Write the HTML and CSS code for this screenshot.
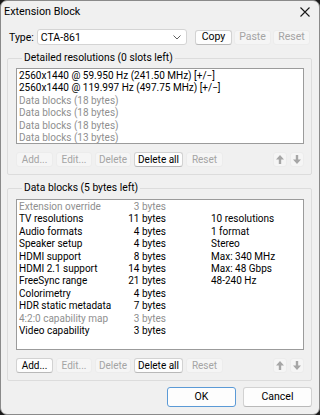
FILE: index.html
```html
<!DOCTYPE html>
<html>
<head>
<meta charset="utf-8">
<link rel="stylesheet" href="styles.css">
</head>
<body>
<div class="window">
  <div class="titlebar">
    <span class="title">Extension Block</span>
    <svg class="close" width="10" height="10" viewBox="0 0 10 10"><path d="M0.5 0.5 L9.5 9.5 M9.5 0.5 L0.5 9.5" stroke="#1a1a1a" stroke-width="1.1" fill="none"/></svg>
  </div>
  <div class="content">
    <div class="type-row">
      <span class="type-label">Type:</span>
      <div class="combo">
        <span>CTA-861</span>
        <svg width="8" height="5" viewBox="0 0 8 5"><path d="M0.5 0.5 L4 4 L7.5 0.5" stroke="#606060" stroke-width="1" fill="none"/></svg>
      </div>
      <button class="btn enabled w37">Copy</button>
      <button class="btn disabled w37">Paste</button>
      <button class="btn disabled w37">Reset</button>
    </div>

    <fieldset class="group g1">
      <legend>Detailed resolutions (0 slots left)</legend>
      <div class="list list1">
        <div class="row">2560x1440 @ 59.950 Hz (241.50 MHz) [+/−]</div>
        <div class="row">2560x1440 @ 119.997 Hz (497.75 MHz) [+/−]</div>
        <div class="row dim">Data blocks (18 bytes)</div>
        <div class="row dim">Data blocks (18 bytes)</div>
        <div class="row dim">Data blocks (18 bytes)</div>
        <div class="row dim">Data blocks (13 bytes)</div>
      </div>
      <div class="btn-row">
        <button class="btn disabled w37">Add...</button>
        <button class="btn disabled w36">Edit...</button>
        <button class="btn disabled w36">Delete</button>
        <button class="btn enabled w49">Delete all</button>
        <button class="btn disabled w37">Reset</button>
        <span class="spacer"></span>
        <button class="btn disabled arrow"><svg width="8" height="9" viewBox="0 0 8 9"><path d="M4 0 L8 4.5 L5.2 4.5 L5.2 9 L2.8 9 L2.8 4.5 L0 4.5 Z" fill="#a6a6a6"/></svg></button>
        <button class="btn disabled arrow"><svg width="8" height="9" viewBox="0 0 8 9"><path d="M4 9 L8 4.5 L5.2 4.5 L5.2 0 L2.8 0 L2.8 4.5 L0 4.5 Z" fill="#a6a6a6"/></svg></button>
      </div>
    </fieldset>

    <fieldset class="group g2">
      <legend>Data blocks (5 bytes left)</legend>
      <div class="list list2">
        <div class="drow dim"><span>Extension override</span><span class="b">3 bytes</span><span class="c"></span></div>
        <div class="drow"><span>TV resolutions</span><span class="b">11 bytes</span><span class="c">10 resolutions</span></div>
        <div class="drow"><span>Audio formats</span><span class="b">4 bytes</span><span class="c">1 format</span></div>
        <div class="drow"><span>Speaker setup</span><span class="b">4 bytes</span><span class="c">Stereo</span></div>
        <div class="drow"><span>HDMI support</span><span class="b">8 bytes</span><span class="c">Max: 340 MHz</span></div>
        <div class="drow"><span>HDMI 2.1 support</span><span class="b">14 bytes</span><span class="c">Max: 48 Gbps</span></div>
        <div class="drow"><span>FreeSync range</span><span class="b">21 bytes</span><span class="c">48-240 Hz</span></div>
        <div class="drow"><span>Colorimetry</span><span class="b">4 bytes</span><span class="c"></span></div>
        <div class="drow"><span>HDR static metadata</span><span class="b">7 bytes</span><span class="c"></span></div>
        <div class="drow dim"><span>4:2:0 capability map</span><span class="b">3 bytes</span><span class="c"></span></div>
        <div class="drow"><span>Video capability</span><span class="b">3 bytes</span><span class="c"></span></div>
      </div>
      <div class="btn-row">
        <button class="btn enabled w37">Add...</button>
        <button class="btn disabled w36">Edit...</button>
        <button class="btn disabled w36">Delete</button>
        <button class="btn enabled w49">Delete all</button>
        <button class="btn disabled w37">Reset</button>
        <span class="spacer"></span>
        <button class="btn disabled arrow"><svg width="8" height="9" viewBox="0 0 8 9"><path d="M4 0 L8 4.5 L5.2 4.5 L5.2 9 L2.8 9 L2.8 4.5 L0 4.5 Z" fill="#a6a6a6"/></svg></button>
        <button class="btn disabled arrow"><svg width="8" height="9" viewBox="0 0 8 9"><path d="M4 9 L8 4.5 L5.2 4.5 L5.2 0 L2.8 0 L2.8 4.5 L0 4.5 Z" fill="#a6a6a6"/></svg></button>
      </div>
    </fieldset>

    <div class="footer">
      <button class="btn default big">OK</button>
      <button class="btn enabled big">Cancel</button>
    </div>
  </div>
</div>
</body>
</html>
```

FILE: styles.css
```css
* { box-sizing: border-box; }
html, body {
  margin: 0;
  padding: 0;
  background: #1b1b1b;
}
body {
  width: 320px;
  height: 415px;
  overflow: hidden;
  font-family: Roboto, "Noto Sans", sans-serif;
  font-size: 10px;
  color: #000;
}
.window {
  width: 320px;
  height: 415px;
  background: #f0f0f0;
  border: 1px solid #8a8a8a;
  border-radius: 7px;
  overflow: hidden;
}
.titlebar {
  height: 21px;
  display: flex;
  align-items: center;
  justify-content: space-between;
  padding: 0 9px 0 3px;
}
.title {
  font-size: 10.8px;
}
.close { display: block; }
.content {
  padding: 0 7px 0 6px;
}
.type-row {
  display: flex;
  align-items: center;
  margin-top: 7px;
  height: 16px;
}
.type-label {
  width: 30px;
  padding-left: 2px;
  font-size: 10.5px;
}
.combo {
  width: 151px;
  height: 16px;
  background: #fff;
  border: 1px solid #d4d4d4;
  border-radius: 3px;
  display: flex;
  align-items: center;
  justify-content: space-between;
  padding: 0 5px 0 3px;
  margin-right: 8px;
  font-size: 10.5px;
}
.combo svg { display: block; }
.btn {
  font-family: inherit;
  font-size: 10px;
  height: 15px;
  padding: 0;
  margin: 0;
  border-radius: 3px;
  display: flex;
  align-items: center;
  justify-content: center;
  line-height: 1;
  flex: none;
}
.type-row .btn { height: 15px; margin-right: 2px; font-size: 10.5px; }
.btn.enabled {
  background: #fdfdfd;
  border: 1px solid #d2d2d2;
  border-bottom-color: #b9b9b9;
  color: #000;
}
.btn.disabled {
  background: #f5f5f5;
  border: 1px solid #ececec;
  color: #a4a4a4;
}
.btn.default {
  background: #fdfdfd;
  border: 1px solid #5b9ad6;
  color: #000;
}
.w36 { width: 36px; }
.w37 { width: 37px; }
.w49 { width: 49px; }
.group {
  margin: 6px 0 0 0;
  padding: 0 7px 7px 8px;
  border: 1px solid #dcdcdc;
  border-radius: 2px;
  min-width: 0;
}
.group legend {
  padding: 0 2px;
  margin-left: 6px;
  line-height: 14px;
  height: 14px;
  font-size: 10.3px;
}
.list {
  background: #fff;
  border: 1px solid #9b9b9b;
  overflow: hidden;
  padding: 1px 0 0 1px;
}
.list1 {
  margin-top: 3px;
  height: 76px;
}
.list2 {
  margin-top: 4px;
  height: 151px;
}
.row, .drow {
  line-height: 12.4px;
  height: 12.4px;
  white-space: nowrap;
  padding-left: 1px;
}
.dim { color: #8f8f8f; }
.drow {
  display: grid;
  grid-template-columns: 95px 52px 1fr;
}
.drow .b { text-align: right; }
.drow .c { padding-left: 45px; }
.btn-row {
  display: flex;
  gap: 3px;
  margin-top: 8px;
  height: 15px;
}
.spacer { flex: 1; }
.arrow {
  width: 14px;
}
.arrow svg { display: block; }
.footer {
  display: flex;
  justify-content: flex-end;
  gap: 7px;
  margin-top: 6px;
}
.btn.big {
  width: 69px;
  height: 20px;
  font-size: 10.5px;
}
```
